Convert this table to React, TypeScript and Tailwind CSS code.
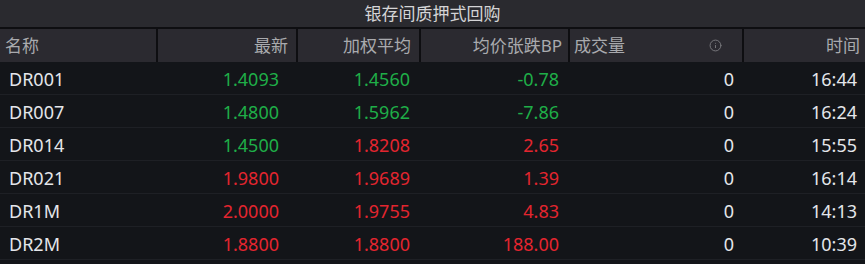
import { Info } from 'lucide-react'

type Row = {
  name: string
  last: string
  avg: string
  bp: string
  vol: string
  time: string
  lastUp: boolean
  avgUp: boolean
  bpUp: boolean
}

const rows: Row[] = [
  { name: 'DR001', last: '1.4093', avg: '1.4560', bp: '-0.78', vol: '0', time: '16:44', lastUp: false, avgUp: false, bpUp: false },
  { name: 'DR007', last: '1.4800', avg: '1.5962', bp: '-7.86', vol: '0', time: '16:24', lastUp: false, avgUp: false, bpUp: false },
  { name: 'DR014', last: '1.4500', avg: '1.8208', bp: '2.65', vol: '0', time: '15:55', lastUp: false, avgUp: true, bpUp: true },
  { name: 'DR021', last: '1.9800', avg: '1.9689', bp: '1.39', vol: '0', time: '16:14', lastUp: true, avgUp: true, bpUp: true },
  { name: 'DR1M', last: '2.0000', avg: '1.9755', bp: '4.83', vol: '0', time: '14:13', lastUp: true, avgUp: true, bpUp: true },
  { name: 'DR2M', last: '1.8800', avg: '1.8800', bp: '188.00', vol: '0', time: '10:39', lastUp: true, avgUp: true, bpUp: true },
]

const up = 'text-[#e3252f]'
const down = 'text-[#1fae48]'

// column template shared by header and rows
const cols = 'grid grid-cols-[158px_140px_123px_149px_174px_1fr]'

export default function App() {
  return (
    <div
      className="w-[865px] h-[264px] bg-[#131519] overflow-hidden text-[18px]"
      style={{ fontFamily: '"Noto Sans", "Noto Sans CJK SC", sans-serif' }}
    >
      <div className="h-[27px] bg-[#2a2a2f] flex items-center justify-center text-[#d4d4d6] text-[17px] leading-none">
        银存间质押式回购
      </div>
      <div className="h-[2px] bg-[#0e0e11]" />
      <div className={clsx(cols, 'h-[33px] bg-[#2b2a30] text-[#a9aaae] text-[17px] leading-none')}>
        <div className="flex items-center pl-[5px] border-r-2 border-[#0e0e11]">名称</div>
        <div className="flex items-center justify-end pr-[8px] border-r-2 border-[#0e0e11]">最新</div>
        <div className="flex items-center justify-end pr-[8px] border-r-2 border-[#0e0e11]">加权平均</div>
        <div className="flex items-center justify-end pr-[6px] border-r-2 border-[#0e0e11]">均价张跌BP</div>
        <div className="flex items-center pl-[4px] pr-[20px] justify-between border-r-2 border-[#0e0e11]">
          <span>成交量</span>
          <Info size={13} strokeWidth={1.8} className="text-[#77777b]" />
        </div>
        <div className="flex items-center justify-end pr-[5px]">时间</div>
      </div>
      {rows.map(r => (
        <div key={r.name} className={clsx(cols, 'h-[33px] border-b border-[#1e2025] leading-none')}>
          <div className="flex items-center pl-[9px] pt-[2px] text-[#e4e6ea]">{r.name}</div>
          <div className={clsx('flex items-center justify-end pr-[19px] pt-[2px]', r.lastUp ? up : down)}>{r.last}</div>
          <div className={clsx('flex items-center justify-end pr-[11px] pt-[2px]', r.avgUp ? up : down)}>{r.avg}</div>
          <div className={clsx('flex items-center justify-end pr-[11px] pt-[2px]', r.bpUp ? up : down)}>{r.bp}</div>
          <div className="flex items-center justify-end pr-[10px] pt-[2px] text-[#e4e6ea]">{r.vol}</div>
          <div className="flex items-center justify-end pr-[8px] pt-[2px] text-[#e4e6ea]">{r.time}</div>
        </div>
      ))}
    </div>
  )
}

function clsx(...c: (string | false | undefined)[]) {
  return c.filter(Boolean).join(' ')
}
